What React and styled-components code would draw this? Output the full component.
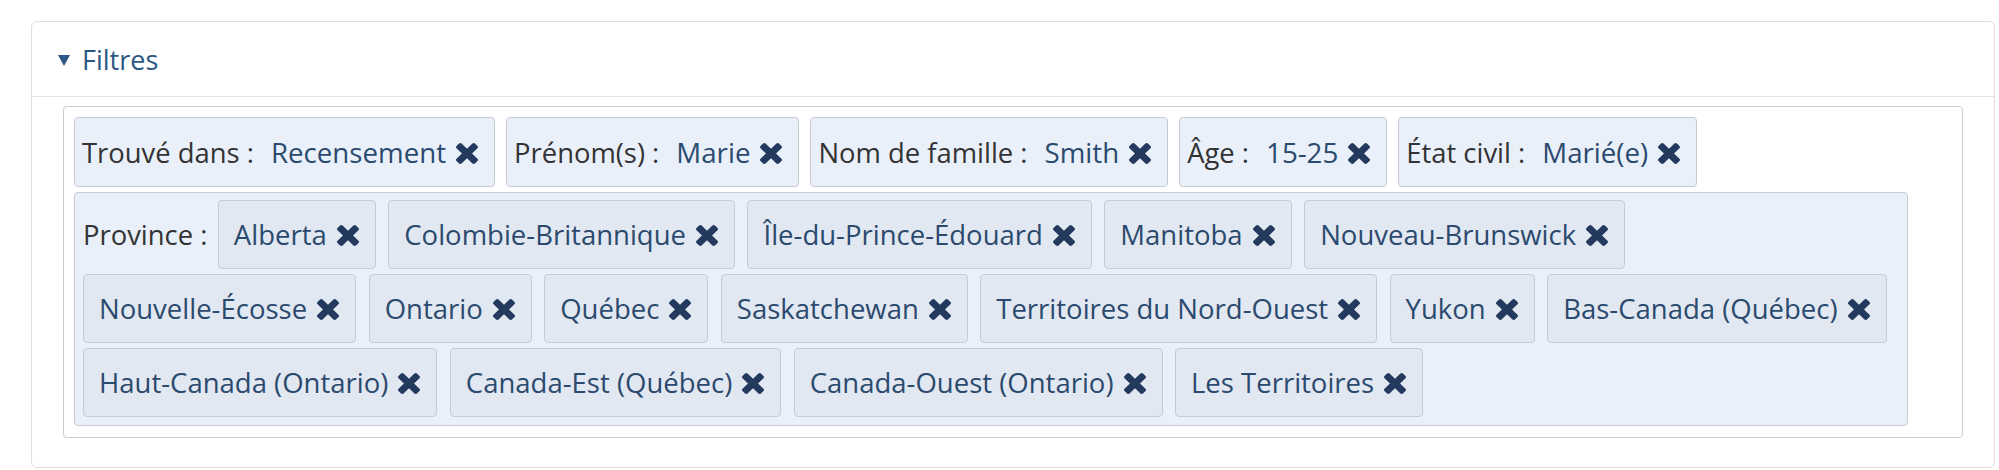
import React from "react";
import styled, { createGlobalStyle } from "styled-components";

const GlobalStyle = createGlobalStyle`
  body {
    margin: 0;
    background: #fff;
    font-family: "Open Sans", "Liberation Sans", sans-serif;
  }
`;

const filters = [
  { label: "Trouvé dans :", value: "Recensement" },
  { label: "Prénom(s) :", value: "Marie" },
  { label: "Nom de famille :", value: "Smith" },
  { label: "Âge :", value: "15-25" },
  { label: "État civil :", value: "Marié(e)" },
];

const provinces = [
  "Alberta",
  "Colombie-Britannique",
  "Île-du-Prince-Édouard",
  "Manitoba",
  "Nouveau-Brunswick",
  "Nouvelle-Écosse",
  "Ontario",
  "Québec",
  "Saskatchewan",
  "Territoires du Nord-Ouest",
  "Yukon",
  "Bas-Canada (Québec)",
  "Haut-Canada (Ontario)",
  "Canada-Est (Québec)",
  "Canada-Ouest (Ontario)",
  "Les Territoires",
];

// heavy "times" cross, same shape as the old font icon
const RemoveIcon = () => (
  <Remove viewBox="110 366 1188 1188" preserveAspectRatio="none">
    <path d="M1298 1322q0 40-28 68l-136 136q-28 28-68 28t-68-28l-294-294-294 294q-28 28-68 28t-68-28l-136-136q-28-28-28-68t28-68l294-294-294-294q-28-28-28-68t28-68l136-136q28-28 68-28t68 28l294 294 294-294q28-28 68-28t68 28l136 136q28 28 28 68t-28 68l-294 294 294 294q28 28 28 68z" />
  </Remove>
);

const App = () => {
  return (
    <Page>
      <GlobalStyle />
      <Panel>
        <PanelHeader>
          <Caret />
          <Title>Filtres</Title>
        </PanelHeader>
        <PanelBody>
          <FilterBox>
            {filters.map((f) => (
              <Chip key={f.label}>
                <Label>{f.label}</Label>
                <Value>{f.value}</Value>
                <RemoveIcon />
              </Chip>
            ))}
            <Group>
              <GroupLabel>Province :</GroupLabel>
              {provinces.map((p) => (
                <SubChip key={p}>
                  <Value>{p}</Value>
                  <RemoveIcon />
                </SubChip>
              ))}
            </Group>
          </FilterBox>
        </PanelBody>
      </Panel>
    </Page>
  );
};

const Page = styled.div`
  padding: 21px 4px 0 31px;
`;
const Panel = styled.div`
  border: 1px solid #dedede;
  border-radius: 6px;
  background: #fff;
`;
const PanelHeader = styled.div`
  display: flex;
  align-items: center;
  height: 74px;
  padding: 0 26px;
  border-bottom: 1px solid #e3e3e3;
`;
const Caret = styled.span`
  width: 0;
  height: 0;
  border-left: 6.5px solid transparent;
  border-right: 6.5px solid transparent;
  border-top: 11px solid #2b5885;
  margin: 3px 12px 0 0;
`;
const Title = styled.span`
  font-size: 27px;
  color: #2b5885;
`;
const PanelBody = styled.div`
  padding: 9px 31px 29px 31px;
`;
const FilterBox = styled.div`
  display: flex;
  flex-wrap: wrap;
  align-items: flex-start;
  gap: 5px 11px;
  padding: 10px 10px 11px 10px;
  border: 1px solid #cdcdcd;
  border-radius: 4px;
`;
const Chip = styled.div`
  display: flex;
  align-items: center;
  box-sizing: border-box;
  height: 70px;
  padding: 0 16px 0 7px;
  background: #e9f0fa;
  border: 1px solid #c8ccd2;
  border-radius: 4px;
  font-size: 27.7px;
`;
const Label = styled.span`
  color: #333;
  font-size: 27.4px;
  margin-right: 17px;
`;
const Value = styled.span`
  color: #2b4a6e;
`;
const Remove = styled.svg`
  flex: none;
  width: 22px;
  height: 21px;
  margin: 2px 0 0 10px;
  fill: #233a5e;
`;
const Group = styled.div`
  display: flex;
  flex-wrap: wrap;
  align-items: center;
  gap: 5px 12.5px;
  box-sizing: border-box;
  flex: 0 0 calc(100% - 44px);
  padding: 7px 8px 8px 8px;
  background: #e9f0fa;
  border: 1px solid #c8ccd2;
  border-radius: 4px;
  font-size: 27.5px;
`;
const GroupLabel = styled.span`
  color: #333;
  font-size: 27.4px;
  margin-right: -2px;
`;
const SubChip = styled.div`
  display: flex;
  align-items: center;
  box-sizing: border-box;
  height: 69px;
  padding: 0 16px 0 15px;
  background: #e2e8f2;
  border: 1px solid #c8ccd2;
  border-radius: 4px;
`;

export default App;
